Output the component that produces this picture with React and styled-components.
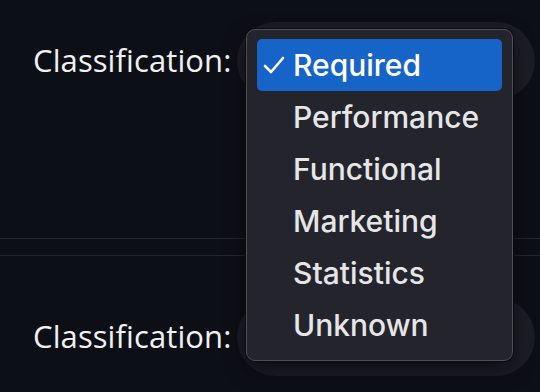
import React from 'react';
import styled, { createGlobalStyle } from 'styled-components';

const Global = createGlobalStyle`
  html, body {
    margin: 0;
    padding: 0;
    background: #0d0f16;
  }
`;

const Page = styled.div`
  position: relative;
  width: 540px;
  height: 392px;
  overflow: hidden;
  background: #0d0f16;
  padding-top: 22px;
  box-sizing: border-box;
`;

const Row = styled.div`
  display: flex;
  align-items: center;
  height: 78px;
  padding-left: 33px;
  margin-top: ${p => p.$top || 0}px;
`;

const Label = styled.span`
  width: 204px;
  margin-top: -3px;
  font-family: 'Open Sans', sans-serif;
  font-size: 31px;
  color: #f1f1f3;
  letter-spacing: 0.1px;
`;

const SelectPill = styled.div`
  width: 298px;
  height: 78px;
  border-radius: 39px;
  background: #1b1d25;
`;

const Divider = styled.div`
  height: 1px;
  background: #23262e;
  margin-top: ${p => p.$top}px;
`;

const Menu = styled.ul`
  position: absolute;
  left: 246px;
  top: 29px;
  width: 267px;
  height: 332px;
  box-sizing: border-box;
  margin: 0;
  padding: 9px 10px 10px;
  list-style: none;
  background: #23242c;
  border: 1px solid #4f5057;
  border-radius: 9px;
  box-shadow: 0 0 0 1px #0a0b10, 0 8px 20px rgba(0, 0, 0, 0.5);
`;

const Item = styled.li`
  position: relative;
  height: 52px;
  display: flex;
  align-items: center;
  padding-left: 36px;
  border-radius: 5px;
  background: ${p => (p.$active ? '#1764c8' : 'transparent')};
  color: ${p => (p.$active ? '#ffffff' : '#e6e6e9')};
  font-family: 'Inter', sans-serif;
  font-size: 30px;
  font-weight: 500;
  letter-spacing: 0;
`;

const Check = styled.svg`
  position: absolute;
  left: 5px;
  top: 16px;
  width: 24px;
  height: 20px;
`;

const options = ['Required', 'Performance', 'Functional', 'Marketing', 'Statistics', 'Unknown'];

export default function App() {
  return (
    <>
      <Global />
      <Page>
        <Row>
          <Label>Classification:</Label>
          <SelectPill />
        </Row>
        <Divider $top={138} />
        <Divider $top={16} />
        <Row $top={42}>
          <Label>Classification:</Label>
          <SelectPill />
        </Row>
        <Menu>
          {options.map((o, i) => (
            <Item key={o} $active={i === 0}>
              {i === 0 && (
                <Check viewBox="0 0 24 20">
                  <path d="M3 11 L9 17 L21 3" fill="none" stroke="#fff" strokeWidth="2.6" strokeLinecap="round" strokeLinejoin="round" />
                </Check>
              )}
              {o}
            </Item>
          ))}
        </Menu>
      </Page>
    </>
  );
}
